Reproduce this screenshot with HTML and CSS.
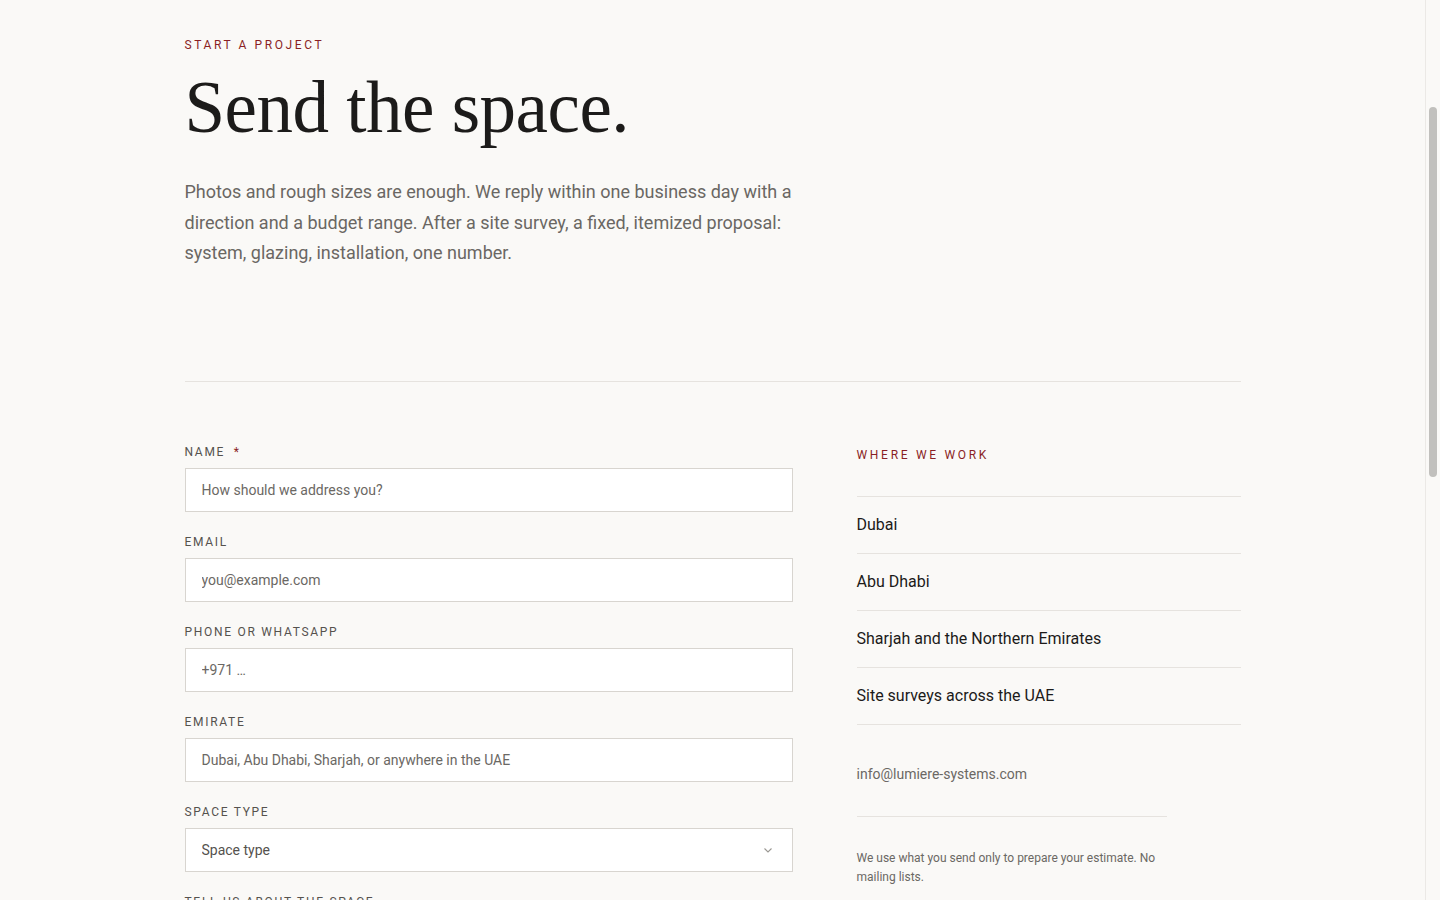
FILE: index.html
```html
<!DOCTYPE html>
<html lang="en">
  <head>
    <meta charset="UTF-8" />
    <meta name="viewport" content="width=device-width, initial-scale=1.0" />
    <title>Start a Project</title>
    <link rel="stylesheet" href="styles.css">
  </head>
  <body>
    <main class="page">
      <header class="intro">
        <p class="eyebrow">Start a project</p>
        <h1>Send the space.</h1>
        <p class="lead">
          Photos and rough sizes are enough. We reply within one business day with a
          direction and a budget range. After a site survey, a fixed, itemized proposal:
          system, glazing, installation, one number.
        </p>
      </header>

      <section class="contact">
        <form class="enquiry-form">
          <div class="form-group">
            <label for="name">Name <span class="req">*</span></label>
            <input type="text" id="name" placeholder="How should we address you?" required />
          </div>
          <div class="form-group">
            <label for="email">Email</label>
            <input type="email" id="email" placeholder="you@example.com" />
          </div>
          <div class="form-group">
            <label for="phone">Phone or WhatsApp</label>
            <input type="tel" id="phone" placeholder="+971 …" />
          </div>
          <div class="form-group">
            <label for="emirate">Emirate</label>
            <input type="text" id="emirate" placeholder="Dubai, Abu Dhabi, Sharjah, or anywhere in the UAE" />
          </div>
          <div class="form-group">
            <label for="space-type">Space type</label>
            <div class="select-wrap">
              <select id="space-type">
                <option>Space type</option>
                <option>Villa</option>
                <option>Apartment</option>
                <option>Office</option>
                <option>Retail</option>
              </select>
              <svg class="chevron" width="12" height="12" viewBox="0 0 12 12" aria-hidden="true">
                <path d="M2.5 4.5 6 8l3.5-3.5" fill="none" stroke="#9a9792" stroke-width="1.1" />
              </svg>
            </div>
          </div>
          <div class="form-group">
            <label for="details">Tell us about the space</label>
            <textarea id="details" rows="6" placeholder="Rough sizes, what you have in mind, timing"></textarea>
          </div>
          <div class="form-group">
            <button type="submit" class="send-button">Send enquiry</button>
          </div>
        </form>

        <aside class="where">
          <p class="eyebrow where-title">Where we work</p>
          <ul class="regions">
            <li>Dubai</li>
            <li>Abu Dhabi</li>
            <li>Sharjah and the Northern Emirates</li>
            <li>Site surveys across the UAE</li>
          </ul>
          <p class="mail">info@lumiere-systems.com</p>
          <p class="note">We use what you send only to prepare your estimate. No mailing lists.</p>
        </aside>
      </section>
    </main>

    <div class="scroll-track" aria-hidden="true"><div class="scroll-thumb"></div></div>
  </body>
</html>
```

FILE: styles.css
```css
body {
  margin: 0;
  padding-right: 15px;
  font-family: Roboto, "Liberation Sans", Arial, sans-serif;
  background-color: #faf9f7;
  color: #1c1b1a;
}

.page {
  max-width: 1056px;
  margin: 0 auto;
  padding: 37px 0 160px;
}

.eyebrow {
  margin: 0;
  font-size: 12px;
  line-height: 16px;
  letter-spacing: 2.6px;
  text-transform: uppercase;
  color: #8a1f25;
}

.intro h1 {
  margin: 13px 0 0;
  font-family: "Liberation Serif", "Times New Roman", serif;
  font-weight: 400;
  font-size: 73px;
  line-height: 84px;
  letter-spacing: -0.5px;
  color: #1c1b1a;
}

.intro .lead {
  max-width: 620px;
  margin: 27px 0 0;
  font-size: 18px;
  line-height: 30.5px;
  color: #6a6763;
}

.contact {
  display: grid;
  grid-template-columns: minmax(0, 19fr) minmax(0, 12fr);
  gap: 64px;
  margin-top: 112px;
  padding-top: 62px;
  border-top: 1px solid #e6e3df;
}

.form-group {
  margin-bottom: 22px;
}

.form-group label {
  display: block;
  margin-bottom: 8px;
  font-size: 12px;
  line-height: 16px;
  letter-spacing: 1.7px;
  text-transform: uppercase;
  color: #55524e;
}

.req {
  margin-left: 4px;
  color: #8a1f25;
}

.form-group input,
.form-group select,
.form-group textarea {
  display: block;
  width: 100%;
  height: 44px;
  padding: 0 16px;
  border: 1px solid #d8d5d0;
  border-radius: 0;
  background-color: #fff;
  box-sizing: border-box;
  font-family: inherit;
  font-size: 14px;
  color: #3a3835;
}

.form-group textarea {
  height: auto;
  padding: 12px 16px;
  resize: vertical;
}

.form-group input::placeholder,
.form-group textarea::placeholder {
  color: #6b6864;
}

.select-wrap {
  position: relative;
}

.form-group select {
  appearance: none;
  color: #55524e;
}

.chevron {
  position: absolute;
  right: 19px;
  top: 16px;
  pointer-events: none;
}

.send-button {
  padding: 14px 28px;
  border: none;
  background-color: #8a1f25;
  color: #fff;
  font-family: inherit;
  font-size: 12px;
  letter-spacing: 2px;
  text-transform: uppercase;
  cursor: pointer;
}

.where-title {
  margin-top: 3px;
  letter-spacing: 2.7px;
}

.regions {
  list-style: none;
  margin: 33px 0 0;
  padding: 0;
  border-top: 1px solid #e6e3df;
}

.regions li {
  padding: 17px 0 18px;
  font-size: 16px;
  line-height: 21px;
  color: #1c1b1a;
  border-bottom: 1px solid #e6e3df;
}

.mail {
  margin: 39px 0 0;
  padding-bottom: 32px;
  max-width: 310px;
  font-size: 14px;
  line-height: 20px;
  color: #6b6864;
  border-bottom: 1px solid #e6e3df;
}

.note {
  max-width: 310px;
  margin: 32px 0 0;
  font-size: 12px;
  line-height: 19px;
  color: #6b6864;
}

.scroll-track {
  position: fixed;
  top: 0;
  right: 0;
  bottom: 0;
  width: 14px;
  border-left: 1px solid #ebe9e6;
  background-color: #faf9f7;
}

.scroll-thumb {
  margin: 107px 0 0 3px;
  width: 8px;
  height: 370px;
  border-radius: 4px;
  background-color: #c1c0bd;
}
```
